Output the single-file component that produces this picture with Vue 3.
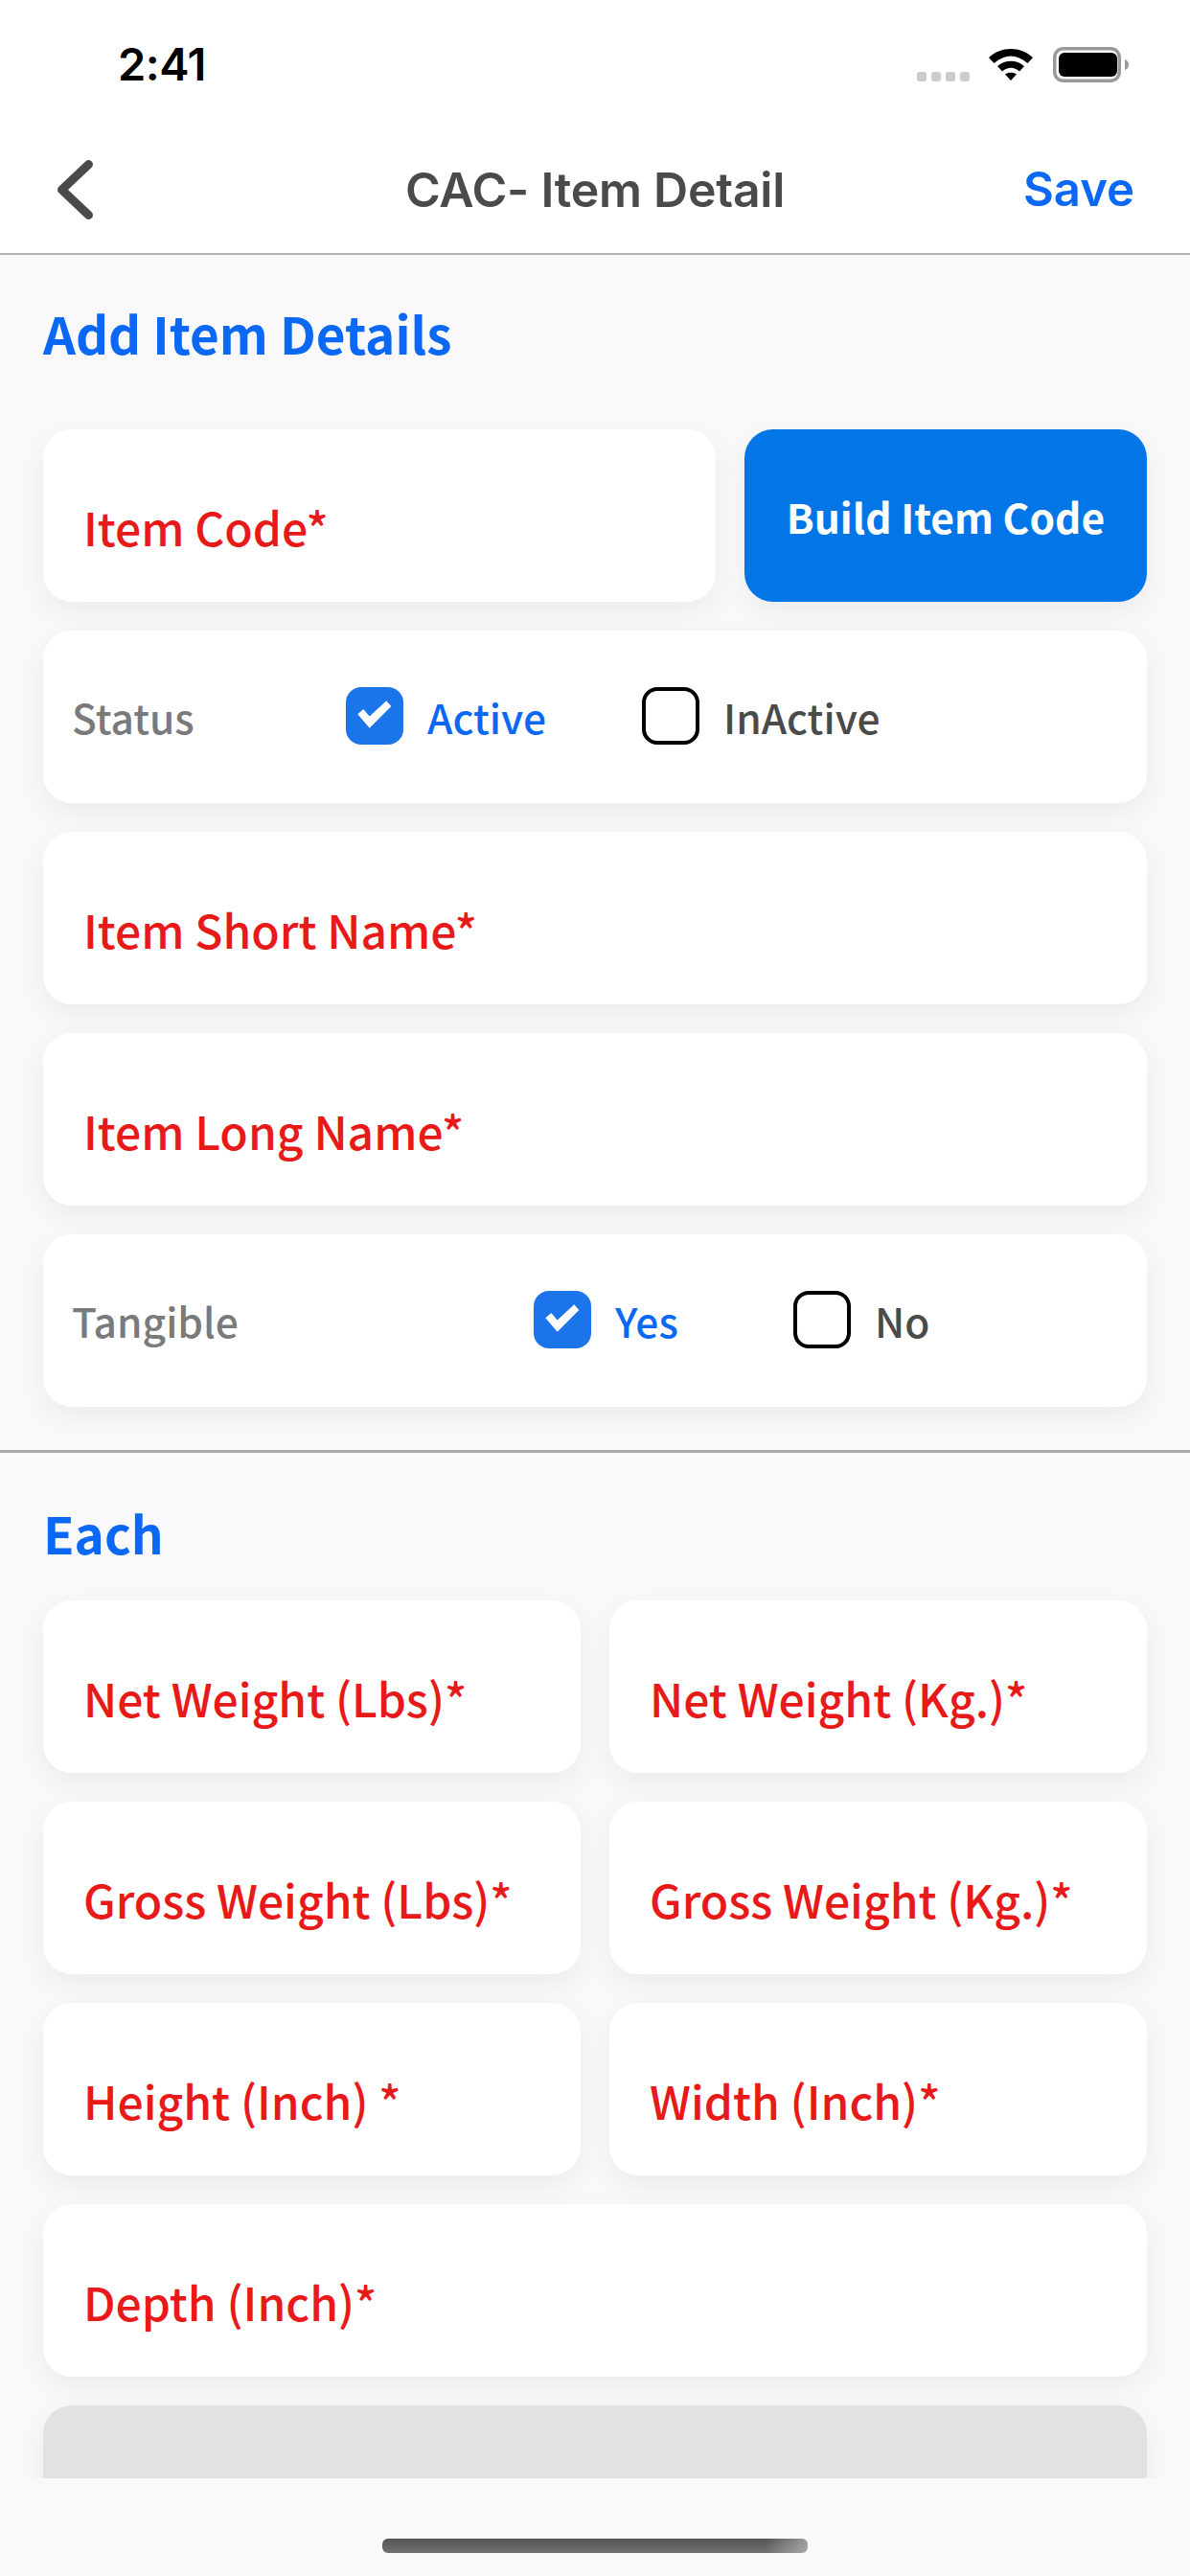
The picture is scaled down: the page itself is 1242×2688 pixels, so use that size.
<script setup>
const eachRows = [
  ['Net Weight (Lbs)*', 'Net Weight (Kg.)*'],
  ['Gross Weight (Lbs)*', 'Gross Weight (Kg.)*'],
  ['Height (Inch) *', 'Width (Inch)*'],
]
</script>

<template>
  <div class="screen">
    <header class="top">
      <div class="status">
        <span class="time">2:41</span>
        <div class="status-icons">
          <div class="dots"><i></i><i></i><i></i><i></i></div>
          <svg class="wifi" width="48" height="36" viewBox="0 0 48 36">
            <path d="M1 11 C14 -1 34 -1 47 11 L41.500 17 C30 7 18 7 6.500 17 Z" fill="#000"/>
            <path d="M10 20 C18 13 30 13 38 20 L33 25.500 C27 20.500 21 20.500 15 25.500 Z" fill="#000"/>
            <path d="M18 28.500 C21.500 26 26.500 26 30 28.500 L24 35 Z" fill="#000"/>
          </svg>
          <svg class="battery" width="80" height="38" viewBox="0 0 80 38">
            <rect x="1.750" y="1.750" width="67.500" height="33.500" rx="9" fill="#fff" stroke="#999" stroke-width="3.500"/>
            <rect x="6" y="6" width="61" height="25" rx="6" fill="#000"/>
            <path d="M75 13 C78 14 79 16 79 18.500 C79 21 78 23 75 24 Z" fill="#999"/>
          </svg>
        </div>
      </div>
      <nav class="nav">
        <svg class="back" width="44" height="66" viewBox="0 0 44 66">
          <path d="M36.500 6.500 L8.500 33 L36.500 59.500" fill="none" stroke="#4a4a4a" stroke-width="9" stroke-linecap="round" stroke-linejoin="round"/>
        </svg>
        <h1 class="title">CAC- Item Detail</h1>
        <span class="save">Save</span>
      </nav>
    </header>

    <main class="content">
      <section class="section">
        <h2 class="heading first">Add Item Details</h2>
        <div class="stack">
          <div class="row code-row">
            <div class="card field">Item Code*</div>
            <div class="build">Build Item Code</div>
          </div>
          <div class="card choice">
            <span class="choice-label status-label">Status</span>
            <span class="option status-opt"><span class="box on"><svg width="60" height="60" viewBox="0 0 60 60"><polygon points="12.300,28.300 18.300,23 24.700,30.500 42.300,14.300 47.300,20 24.700,42.700" fill="#fff"/></svg></span><span class="opt-on">Active</span></span>
            <span class="option"><span class="box"></span><span class="opt-off">InActive</span></span>
          </div>
          <div class="card field">Item Short Name*</div>
          <div class="card field">Item Long Name*</div>
          <div class="card choice">
            <span class="choice-label tangible-label">Tangible</span>
            <span class="option tangible-opt"><span class="box on"><svg width="60" height="60" viewBox="0 0 60 60"><polygon points="12.300,28.300 18.300,23 24.700,30.500 42.300,14.300 47.300,20 24.700,42.700" fill="#fff"/></svg></span><span class="opt-on">Yes</span></span>
            <span class="option"><span class="box"></span><span class="opt-off">No</span></span>
          </div>
        </div>
      </section>

      <hr class="divider" />

      <section class="section">
        <h2 class="heading">Each</h2>
        <div class="stack">
          <div v-for="row in eachRows" :key="row[0]" class="row">
            <div v-for="label in row" :key="label" class="card field half">{{ label }}</div>
          </div>
          <div class="card field">Depth (Inch)*</div>
          <div class="card disabled"></div>
        </div>
      </section>
    </main>

    <footer class="bottom"><div class="home"></div></footer>
  </div>
</template>

<style scoped>
.screen {
  width: 1242px;
  height: 2688px;
  display: flex;
  flex-direction: column;
  background: #f9f9fb;
  font-family: "Noto Sans CJK JP", "Noto Sans", sans-serif;
  overflow: hidden;
}
.top {
  height: 264px;
  flex: none;
  background: #fff;
  border-bottom: 2px solid #b0b0b0;
  box-sizing: content-box;
}
.status {
  height: 132px;
  display: flex;
  align-items: flex-start;
  justify-content: space-between;
  padding: 42px 63px 0 123px;
  box-sizing: border-box;
}
.time {
  font: 600 47px/50px Inter, "Liberation Sans", sans-serif;
  letter-spacing: -0.5px;
  color: #000;
}
.status-icons {
  display: flex;
  align-items: flex-start;
  padding-top: 7px;
}
.dots {
  display: flex;
  gap: 5px;
  margin: 26px 19px 0 0;
}
.dots i {
  display: block;
  width: 10px;
  height: 10px;
  border-radius: 3px;
  background: #cbcbcb;
}
.wifi { margin-right: 20px; }
.nav {
  height: 132px;
  display: flex;
  align-items: center;
  justify-content: space-between;
  padding: 0 58px 0 56px;
  box-sizing: border-box;
  position: relative;
}
.title {
  margin: 0;
  position: absolute;
  left: 0;
  right: 0;
  top: 36px;
  text-align: center;
  font: 600 50px/60px Inter, "Liberation Sans", sans-serif;
  letter-spacing: -0.25px;
  color: #4a4a4a;
}
.save {
  font: 600 49px/60px Inter, "Liberation Sans", sans-serif;
  color: #0a68f5;
}
.content {
  flex: 1;
  min-height: 0;
  overflow: hidden;
}
.section { padding: 0 45px; }
.heading {
  margin: 0;
  font-size: 53px;
  font-weight: 700;
  line-height: 70px;
  color: #0a68f5;
}
.heading.first { padding-top: 46px; padding-bottom: 66px; }
.heading:not(.first) { padding-top: 48px; padding-bottom: 36px; }
.stack {
  display: flex;
  flex-direction: column;
  gap: 30px;
}
.row {
  display: flex;
  gap: 30px;
}
.card {
  height: 180px;
  flex: none;
  box-sizing: border-box;
  background: #fff;
  border-radius: 30px;
  box-shadow: 0 10px 30px rgba(0, 0, 0, 0.06);
}
.field {
  display: flex;
  align-items: center;
  padding: 21px 0 0 42px;
  font-size: 48px;
  font-weight: 500;
  color: #e81919;
}
.code-row .field { flex: 1; }
.half { flex: 1 1 0; min-width: 0; }
.build {
  width: 420px;
  height: 180px;
  flex: none;
  display: flex;
  align-items: center;
  justify-content: center;
  background: #0276e6;
  border-radius: 30px;
  box-shadow: 0 10px 30px rgba(0, 0, 0, 0.06);
  color: #fff;
  font-size: 42.500px;
  font-weight: 700;
}
.choice {
  display: flex;
  align-items: center;
  padding: 0 0 2px 30px;
  font-size: 42.500px;
  font-weight: 500;
}
.choice-label { color: #7a7a7a; }
.status-label { width: 286px; }
.tangible-label { width: 482px; }
.option {
  display: flex;
  align-items: center;
  gap: 25px;
}
.status-opt { width: 309px; }
.tangible-opt { width: 271px; }
.box {
  width: 60px;
  height: 60px;
  flex: none;
  box-sizing: border-box;
  border: 4px solid #000;
  border-radius: 16px;
  display: flex;
  align-items: center;
  justify-content: center;
}
.box.on {
  border: 0;
  background: #1c74ea;
}
.opt-on { color: #0a68f5; }
.opt-off { color: #4a4a4a; }
.divider {
  margin: 45px 0 0;
  border: 0;
  height: 3px;
  background: #aaa;
}
.disabled { background: #e2e2e2; }
.bottom {
  height: 102px;
  flex: none;
  background: #f9f9fb;
  position: relative;
  z-index: 1;
  display: flex;
  justify-content: center;
  padding-top: 63px;
  box-sizing: border-box;
}
.home {
  width: 444px;
  height: 15px;
  border-radius: 6px;
  background:
    linear-gradient(90deg, rgba(255, 255, 255, 0) 90%, rgba(255, 255, 255, 0.4) 100%),
    linear-gradient(180deg, #555 0%, #707070 100%);
}
</style>
